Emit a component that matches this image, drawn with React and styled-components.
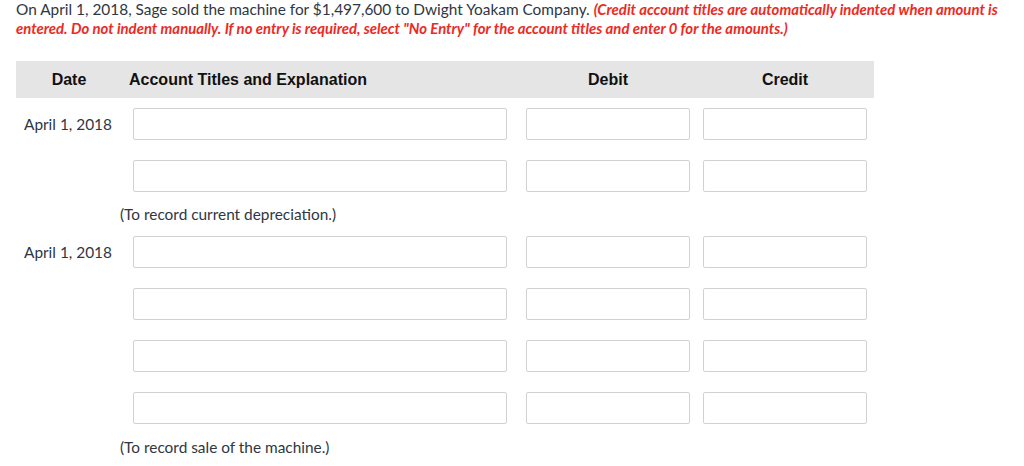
import styled, { createGlobalStyle } from 'styled-components';

const GlobalStyle = createGlobalStyle`
    body {
        margin: 0;
        background: #fff;
        font-family: Lato, 'Open Sans', sans-serif;
        color: #2f3742;
    }
`;

const Page = styled.div`
    padding: 0 16px;
    width: 1024px;
    box-sizing: border-box;
`;

const Prompt = styled.p`
    margin: 0 0 23px;
    font-size: 15.4px;
    line-height: 19px;

    em {
        color: #ec2a24;
        font-weight: 700;
        font-size: 14.9px;
    }
`;

const Grid = styled.div`
    display: grid;
    grid-template-columns: 117px 393px 177px 171px;
    width: 858px;
`;

const HeadRow = styled.div`
    display: contents;
`;

const HeadCell = styled.div`
    background: #e5e5e5;
    height: 37px;
    display: flex;
    align-items: center;
    justify-content: ${(p) => (p.$align === 'left' ? 'flex-start' : 'center')};
    font-family: 'Liberation Sans', Arial, sans-serif;
    font-weight: 700;
    font-size: 16px;
    color: #111;
    ${(p) => p.$pad && `padding-right: ${p.$pad}px;`}
`;

const HeadTitle = styled.span`
    margin-left: -4px;
`;

const HeadLabel = styled.span`
    width: 164px;
    text-align: center;
`;

const Cell = styled.div`
    padding: 10px 0;
    display: flex;
    align-items: center;
`;

const DateText = styled.span`
    padding-left: 8px;
    font-size: 15.4px;
`;

const Field = styled.input`
    box-sizing: border-box;
    height: 32px;
    width: ${(p) => p.$w}px;
    border: 1px solid #d2d2d2;
    border-radius: 2px;
    background: #fff;
    margin: 0;
    padding: 0 6px;
    font-family: inherit;
    font-size: 15px;
    outline: none;
`;

const Note = styled.div`
    grid-column: 2 / -1;
    margin-left: -13px;
    font-size: 15.4px;
    line-height: ${(p) => p.$lh}px;
`;

const entries = [
    { date: 'April 1, 2018', lines: 2, note: '(To record current depreciation.)', lh: 24 },
    { date: 'April 1, 2018', lines: 4, note: '(To record sale of the machine.)', lh: 26 },
];

const EntryLine = ({ date }) => (
    <>
        <Cell>{date && <DateText>{date}</DateText>}</Cell>
        <Cell>
            <Field $w={374} />
        </Cell>
        <Cell>
            <Field $w={164} />
        </Cell>
        <Cell>
            <Field $w={164} />
        </Cell>
    </>
);

export default function App() {
    return (
        <Page>
            <GlobalStyle />
            <Prompt>
                On April 1, 2018, Sage sold the machine for $1,497,600 to Dwight Yoakam Company.{' '}
                <em>
                    (Credit account titles are automatically indented when amount is entered. Do not
                    indent manually. If no entry is required, select "No Entry" for the account titles
                    and enter 0 for the amounts.)
                </em>
            </Prompt>
            <Grid>
                <HeadRow>
                    <HeadCell $pad={11}>Date</HeadCell>
                    <HeadCell $align="left">
                        <HeadTitle>Account Titles and Explanation</HeadTitle>
                    </HeadCell>
                    <HeadCell $align="left">
                        <HeadLabel>Debit</HeadLabel>
                    </HeadCell>
                    <HeadCell $align="left">
                        <HeadLabel>Credit</HeadLabel>
                    </HeadCell>
                </HeadRow>
                {entries.map((entry, i) => (
                    <>
                        {Array.from({ length: entry.lines }).map((_, j) => (
                            <EntryLine key={`${i}-${j}`} date={j === 0 ? entry.date : ''} />
                        ))}
                        <Note $lh={entry.lh}>{entry.note}</Note>
                    </>
                ))}
            </Grid>
        </Page>
    );
}
